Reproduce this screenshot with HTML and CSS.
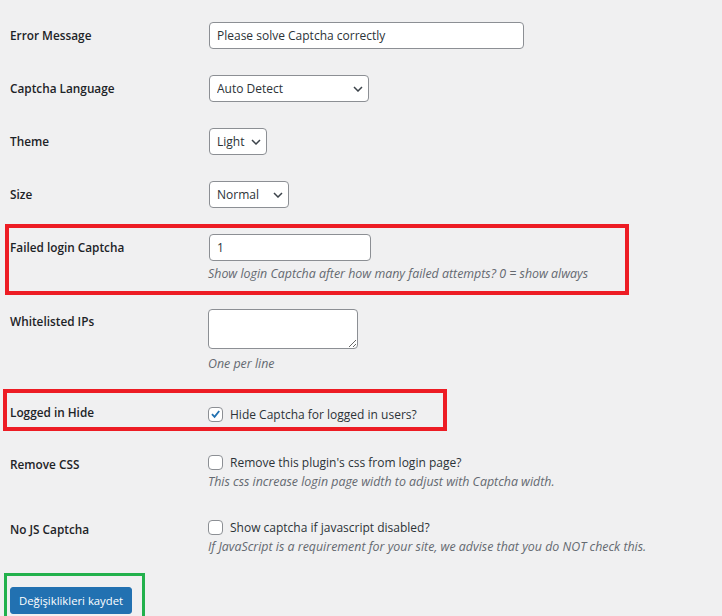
FILE: index.html
```html
<!DOCTYPE html>
<html lang="en">
<head>
<meta charset="utf-8">
<title>Captcha Settings</title>
<link rel="stylesheet" href="styles.css">
</head>
<body>
<div class="page">
  <form class="form-table">
    <div class="row">
      <div class="th"><label>Error Message</label></div>
      <div class="td"><input class="input w-error" type="text" value="Please solve Captcha correctly"></div>
    </div>
    <div class="row">
      <div class="th"><label>Captcha Language</label></div>
      <div class="td">
        <span class="select w-lang"><select><option>Auto Detect</option></select><svg class="chev" viewBox="0 0 10 6" width="10" height="6"><path d="M1 1 L5 5 L9 1" fill="none" stroke="#3c434a" stroke-width="1.5"/></svg></span>
      </div>
    </div>
    <div class="row">
      <div class="th"><label>Theme</label></div>
      <div class="td">
        <span class="select w-theme"><select><option>Light</option></select><svg class="chev" viewBox="0 0 10 6" width="10" height="6"><path d="M1 1 L5 5 L9 1" fill="none" stroke="#3c434a" stroke-width="1.5"/></svg></span>
      </div>
    </div>
    <div class="row">
      <div class="th"><label>Size</label></div>
      <div class="td">
        <span class="select w-size"><select><option>Normal</option></select><svg class="chev" viewBox="0 0 10 6" width="10" height="6"><path d="M1 1 L5 5 L9 1" fill="none" stroke="#3c434a" stroke-width="1.5"/></svg></span>
      </div>
    </div>
    <div class="row">
      <div class="th"><label>Failed login Captcha</label></div>
      <div class="td">
        <input class="input w-failed" type="text" value="1">
        <p class="description d-failed">Show login Captcha after how many failed attempts? 0 = show always</p>
      </div>
    </div>
    <div class="row">
      <div class="th"><label>Whitelisted IPs</label></div>
      <div class="td td-ips">
        <textarea class="textarea"></textarea>
        <p class="description d-ips">One per line</p>
      </div>
    </div>
    <div class="row">
      <div class="th th-check"><label>Logged in Hide</label></div>
      <div class="td td-check">
        <label class="check"><span class="box"><svg viewBox="0 0 14 14" width="14" height="14"><path d="M3.2 7.2 L6 10 L11 3.8" fill="none" stroke="#2271b1" stroke-width="2"/></svg></span>Hide Captcha for logged in users?</label>
      </div>
    </div>
    <div class="row">
      <div class="th"><label>Remove CSS</label></div>
      <div class="td td-check">
        <label class="check"><span class="box"></span>Remove this plugin's css from login page?</label>
        <p class="description d-check">This css increase login page width to adjust with Captcha width.</p>
      </div>
    </div>
    <div class="row">
      <div class="th"><label>No JS Captcha</label></div>
      <div class="td td-check">
        <label class="check"><span class="box"></span>Show captcha if javascript disabled?</label>
        <p class="description d-check">If JavaScript is a requirement for your site, we advise that you do NOT check this.</p>
      </div>
    </div>
    <div class="submit">
      <button class="button-primary" type="button">Değişiklikleri kaydet</button>
    </div>
  </form>
  <div class="mark mark-red mark-failed"></div>
  <div class="mark mark-red mark-logged"></div>
  <div class="mark mark-green mark-submit"></div>
</div>
</body>
</html>
```
FILE: styles.css
```css
html, body {
  margin: 0;
  padding: 0;
  background: #f0f0f1;
}
body {
  font-family: "Open Sans", "Noto Sans", sans-serif;
  font-size: 12px;
  color: #1d2327;
}
.page {
  position: relative;
  width: 722px;
  height: 616px;
  overflow: hidden;
}
.form-table {
  margin: 0;
  padding-top: 9px;
}
.row {
  display: grid;
  grid-template-columns: 209px 1fr;
  align-items: start;
}
.th {
  padding: 17px 0 0 10px;
  line-height: 18px;
  font-size: 11.8px;
  font-weight: 600;
  color: #1d2327;
}
.th-check {
  padding-top: 13px;
}
.td {
  padding: 13px 0;
  display: flex;
  flex-direction: column;
  align-items: flex-start;
}
.td-ips {
  padding: 14px 0 18px;
}
.input, .select select, .textarea {
  box-sizing: border-box;
  font-family: inherit;
  font-size: 12px;
  color: #2c3338;
  background: #fff;
  border: 1px solid #8c8f94;
  border-radius: 4px;
  margin: 0;
}
.input {
  height: 27px;
  padding: 0 7px;
  line-height: 25px;
}
.w-error { width: 315px; }
.w-failed { width: 162px; }
.select {
  position: relative;
  display: inline-block;
}
.select select {
  -webkit-appearance: none;
  appearance: none;
  height: 27px;
  padding: 0 20px 0 7px;
  width: 100%;
  line-height: 25px;
}
.w-lang { width: 160px; }
.w-theme { width: 58px; }
.w-theme select { padding-right: 14px; }
.w-size { width: 80px; }
.chev {
  position: absolute;
  right: 6px;
  top: 11px;
  pointer-events: none;
}
.textarea {
  width: 150px;
  height: 40px;
  margin-left: -1px;
  padding: 2px 6px;
  resize: both;
}
.description {
  margin: 0;
  font-style: italic;
  font-size: 12.4px;
  color: #646970;
  line-height: 16px;
}
.d-failed { margin-top: 5px; margin-left: -1px; }
.d-ips { margin-top: 7px; margin-left: -1px; }
.d-check { margin-top: 1px; margin-left: -1px; }
.check {
  display: flex;
  align-items: center;
  gap: 7px;
  height: 22px;
  color: #2c3338;
  margin-left: -1px;
}
.box {
  box-sizing: border-box;
  width: 15px;
  height: 15px;
  border: 1px solid #8c8f94;
  border-radius: 4px;
  background: #fff;
  display: flex;
  align-items: center;
  justify-content: center;
}
.box svg {
  display: block;
}
.submit {
  padding: 19px 0 0 10px;
}
.button-primary {
  box-sizing: border-box;
  width: 122px;
  height: 27px;
  border: 1px solid #2271b1;
  border-radius: 3px;
  background: #2271b1;
  color: #fff;
  font-family: inherit;
  font-size: 11.3px;
  padding: 0;
  cursor: pointer;
}
.mark {
  position: absolute;
  box-sizing: border-box;
  pointer-events: none;
}
.mark-red {
  border: 4px solid #ed1c24;
}
.mark-green {
  border: 3px solid #22b14c;
  border-bottom: 0;
}
.mark-failed {
  left: 5px;
  top: 224px;
  width: 624px;
  height: 71px;
}
.mark-logged {
  left: 3px;
  top: 389px;
  width: 444px;
  height: 42px;
}
.mark-submit {
  left: 4px;
  top: 573px;
  width: 141px;
  height: 43px;
}
```
